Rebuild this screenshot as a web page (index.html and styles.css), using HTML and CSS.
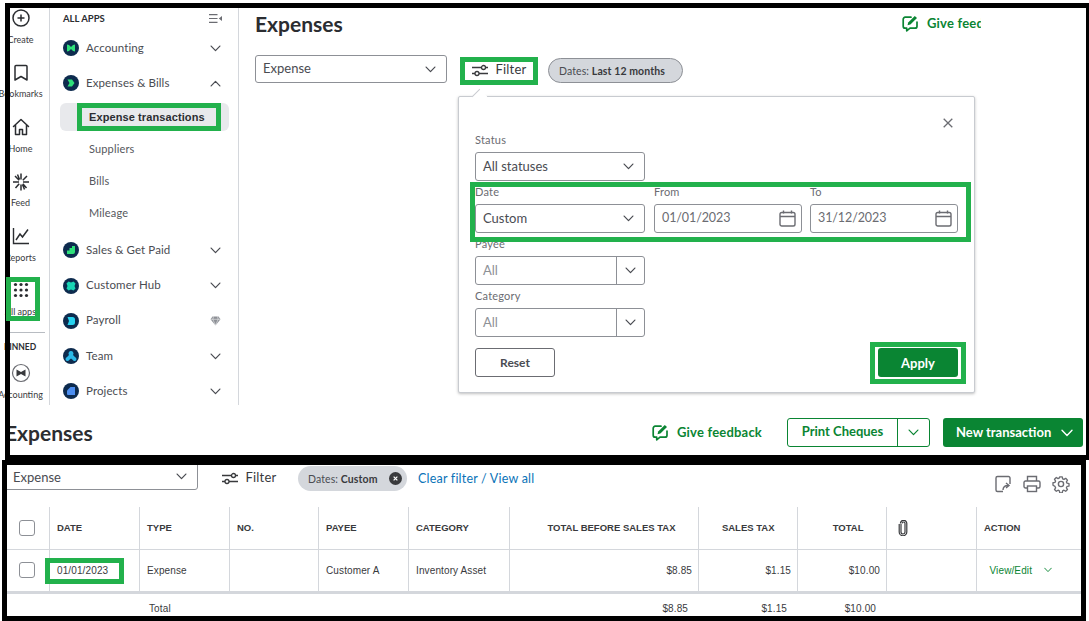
FILE: index.html
```html
<!DOCTYPE html>
<html lang="en">
<head>
<meta charset="utf-8">
<title>Expenses</title>
<link rel="stylesheet" href="styles.css">
</head>
<body>
<svg class="defs" width="0" height="0" aria-hidden="true">
  <symbol id="chev" viewBox="0 0 12 8"><path d="M1 1.200 6 6.400 11 1.200" fill="none" stroke="currentColor" stroke-width="1.400" stroke-linecap="round" stroke-linejoin="round"/></symbol>
  <symbol id="sliders" viewBox="0 0 16 13"><g fill="none" stroke="currentColor" stroke-width="1.300"><path d="M0 3.500h9.500M13.500 3.500H16M0 9.500h3M7 9.500h9"/><circle cx="11.500" cy="3.500" r="2"/><circle cx="5" cy="9.500" r="2"/></g></symbol>
  <symbol id="cal" viewBox="0 0 17 17"><g fill="none" stroke="#6b6c72" stroke-width="1.400"><rect x="1" y="2.500" width="15" height="13.500" rx="1.800"/><path d="M1 6.500h15M4.500 .5v3M12.500 .5v3"/></g></symbol>
  <symbol id="feedback" viewBox="0 0 17 17"><path d="M9 2.200H3.200A2 2 0 0 0 1.200 4.200v7a2 2 0 0 0 2 2h1.500v2.600l3.300-2.600h5a2 2 0 0 0 2-2V7" fill="none" stroke="#0a8533" stroke-width="1.700" stroke-linejoin="round" stroke-linecap="round"/><path d="M5.500 10.300l.7-2.800L12.800 1l2.200 2.100-6.600 6.500z" fill="#0a8533"/></symbol>
</svg>

<section class="shot shot-top">
  <div class="upper">
    <nav class="rail">
      <div class="rail-group">
        <a class="rail-item"><svg class="rail-icon" viewBox="0 0 20 20"><circle cx="10" cy="10" r="8" fill="none" stroke="#2b2d31" stroke-width="1.500"/><path d="M10 6.500v7M6.500 10h7" stroke="#2b2d31" stroke-width="1.500"/></svg><span>Create</span></a>
        <a class="rail-item"><svg class="rail-icon" viewBox="0 0 20 20"><path d="M5 2.500h10a1 1 0 0 1 1 1V17l-6-3.500L4 17V3.500a1 1 0 0 1 1-1z" fill="none" stroke="#2b2d31" stroke-width="1.500" stroke-linejoin="round"/></svg><span>Bookmarks</span></a>
        <a class="rail-item"><svg class="rail-icon" viewBox="0 0 20 20"><path d="M2.500 9.500 10 2.500l7.500 7M4.500 8v9.500h4v-5h3v5h4V8" fill="none" stroke="#2b2d31" stroke-width="1.500" stroke-linejoin="round" stroke-linecap="round"/></svg><span>Home</span></a>
        <a class="rail-item"><svg class="rail-icon" viewBox="0 0 20 20"><path d="M10 1.500v6M10 12.500v6M2 10h6M12 10h6M4 4l4.200 4.200M16 4l-4.200 4.200M4.500 16l3.700-4.200M15.500 16l-3.700-4.200M6.500 2.500l2 5M13.500 17.500l-2-5" fill="none" stroke="#2b2d31" stroke-width="1.500"/></svg><span>Feed</span></a>
        <a class="rail-item"><svg class="rail-icon" viewBox="0 0 20 20"><path d="M2.500 2v15.500H18" fill="none" stroke="#2b2d31" stroke-width="1.400"/><path d="M5 14l4-6 2.500 3L17 3.500" fill="none" stroke="#2b2d31" stroke-width="1.500"/></svg><span>Reports</span></a>
        <a class="rail-item"><svg class="rail-icon" viewBox="0 0 20 20"><g fill="#2b2d31"><circle cx="4.500" cy="3.500" r="1.600"/><circle cx="10" cy="3.500" r="1.600"/><circle cx="15.500" cy="3.500" r="1.600"/><circle cx="4.500" cy="9" r="1.600"/><circle cx="10" cy="9" r="1.600"/><circle cx="15.500" cy="9" r="1.600"/><circle cx="4.500" cy="14.500" r="1.600"/><circle cx="10" cy="14.500" r="1.600"/><circle cx="15.500" cy="14.500" r="1.600"/></g></svg><span>All apps</span></a>
      </div>
      <div class="rail-pinned">
        <strong>PINNED</strong>
        <a class="rail-item"><svg class="rail-icon" viewBox="0 0 20 20"><circle cx="10" cy="10" r="8.500" fill="none" stroke="#6b6c72" stroke-width="1.200"/><path d="M5.500 6.500 10 9l4.500-2.500v7L10 11l-4.500 2.500z" fill="#393a3d"/></svg><span>Accounting</span></a>
      </div>
    </nav>

    <aside class="sidebar">
      <header class="side-head">
        <strong>ALL APPS</strong>
        <svg class="collapse" viewBox="0 0 13 9"><path d="M0 .7h8.500M0 4.500h8.500M0 8.300h8.500" stroke="#6b6c72" stroke-width="1.200"/><path d="M13 2v5L9.800 4.500z" fill="#6b6c72"/></svg>
      </header>
      <ul class="side-nav">
        <li class="side-row"><svg class="app" viewBox="0 0 16 16"><circle cx="8" cy="8" r="8" fill="#0d2b4e"/><path d="M4 4.500l2 .5 2 2 2-2 2-.5v7l-2-.5-2-2-2 2-2 .5z" fill="#2ee07a"/></svg><span>Accounting</span><svg class="chev"><use href="#chev"/></svg></li>
        <li class="side-row"><svg class="app" viewBox="0 0 16 16"><circle cx="8" cy="8" r="8" fill="#0d2b4e"/><path d="M4.500 4.500h4.500l2.500 3.500-2.500 3.500H4.500L6.500 8z" fill="#2ee07a"/></svg><span>Expenses &amp; Bills</span><svg class="chev flip"><use href="#chev"/></svg></li>
        <li class="sub-group">
          <a class="sub-row active">Expense transactions</a>
          <a class="sub-row">Suppliers</a>
          <a class="sub-row">Bills</a>
          <a class="sub-row">Mileage</a>
        </li>
        <li class="side-row"><svg class="app" viewBox="0 0 16 16"><circle cx="8" cy="8" r="8" fill="#0d2b4e"/><path d="M4 12V8.500h2.500V6h2.500V4h3v6a2 2 0 0 1-2 2z" fill="#2ee07a"/></svg><span>Sales &amp; Get Paid</span><svg class="chev"><use href="#chev"/></svg></li>
        <li class="side-row"><svg class="app" viewBox="0 0 16 16"><circle cx="8" cy="8" r="8" fill="#0d2b4e"/><path d="M5.500 3.500 8 4.500l2.500-1 2 2-1 2.500 1 2.500-2 2-2.500-1-2.500 1-2-2 1-2.500-1-2.500z" fill="#1ad5b5"/></svg><span>Customer Hub</span><svg class="chev"><use href="#chev"/></svg></li>
        <li class="side-row"><svg class="app" viewBox="0 0 16 16"><circle cx="8" cy="8" r="8" fill="#0d2b4e"/><path d="M4.500 4h5a2.500 2.500 0 0 1 2.500 2.500v3A2.500 2.500 0 0 1 9.500 12h-5L6 8z" fill="#27d3f0"/></svg><span>Payroll</span><svg class="gem" viewBox="0 0 11 10"><path d="M2.500.5h6l2 2.800L5.500 9.500.5 3.300z" fill="#8d9096"/><path d="M.5 3.300h10M3.500.5l-.7 2.800 2.700 6 2.700-6L7.500.5" fill="none" stroke="#fff" stroke-width=".5"/></svg></li>
        <li class="side-row"><svg class="app" viewBox="0 0 16 16"><circle cx="8" cy="8" r="8" fill="#0d2b4e"/><path d="M8 3a2.500 2.500 0 0 1 2 4l2.200 2.200a2 2 0 1 1-2.600 2.600L8 10.500l-1.600 1.300a2 2 0 1 1-2.600-2.600L6 7a2.500 2.500 0 0 1 2-4z" fill="#2bb8e8"/></svg><span>Team</span><svg class="chev"><use href="#chev"/></svg></li>
        <li class="side-row"><svg class="app" viewBox="0 0 16 16"><circle cx="8" cy="8" r="8" fill="#0d2b4e"/><path d="M4 7.500 7.500 4H12v8H5a1 1 0 0 1-1-1z" fill="#4c8ef0"/></svg><span>Projects</span><svg class="chev"><use href="#chev"/></svg></li>
      </ul>
    </aside>

    <main class="main">
      <div class="title-row">
        <h1 class="title">Expenses</h1>
        <a class="feedback feedback-cut"><svg class="fb-icon"><use href="#feedback"/></svg><span>Give feedback</span></a>
      </div>
      <div class="filter-row">
        <div class="select select-type"><span>Expense</span><svg class="chev"><use href="#chev"/></svg></div>
        <button class="filter-btn"><svg class="sliders"><use href="#sliders"/></svg><span>Filter</span></button>
        <div class="pill pill-last"><span>Dates: <b>Last 12 months</b></span></div>
      </div>

      <div class="popover">
        <i class="pop-arrow"></i>
        <svg class="pop-close" viewBox="0 0 10 10"><path d="M.7.7l8.600 8.600M9.300.7.700 9.300" stroke="#6b6c72" stroke-width="1.300"/></svg>
        <div class="field">
          <label>Status</label>
          <div class="select w170"><span>All statuses</span><svg class="chev"><use href="#chev"/></svg></div>
        </div>
        <div class="field-row">
          <div class="field">
            <label>Date</label>
            <div class="select w170"><span>Custom</span><svg class="chev"><use href="#chev"/></svg></div>
          </div>
          <div class="field">
            <label>From</label>
            <div class="select w148"><span>01/01/2023</span><svg class="cal"><use href="#cal"/></svg></div>
          </div>
          <div class="field">
            <label>To</label>
            <div class="select w148"><span>31/12/2023</span><svg class="cal"><use href="#cal"/></svg></div>
          </div>
        </div>
        <div class="field">
          <label>Payee</label>
          <div class="combo"><span>All</span><i><svg class="chev"><use href="#chev"/></svg></i></div>
        </div>
        <div class="field">
          <label>Category</label>
          <div class="combo"><span>All</span><i><svg class="chev"><use href="#chev"/></svg></i></div>
        </div>
        <div class="pop-foot">
          <button class="btn-reset">Reset</button>
          <button class="btn-apply">Apply</button>
        </div>
      </div>
    </main>
  </div>

  <div class="page-head">
    <h1 class="title title-cut">Expenses</h1>
    <a class="feedback"><svg class="fb-icon"><use href="#feedback"/></svg><span>Give feedback</span></a>
    <div class="split">
      <button class="split-main">Print Cheques</button>
      <button class="split-arrow"><svg class="chev"><use href="#chev"/></svg></button>
    </div>
    <button class="new-btn"><span>New transaction</span><svg class="chev"><use href="#chev"/></svg></button>
  </div>

  <i class="mark mark-apps"></i>
  <i class="mark mark-side"></i>
  <i class="mark mark-filter"></i>
  <i class="mark mark-date"></i>
  <i class="mark mark-apply"></i>
</section>

<section class="shot shot-bottom">
  <div class="toolbar">
    <div class="select select-cut"><span>Expense</span><svg class="chev"><use href="#chev"/></svg></div>
    <button class="filter-btn filter-plain"><svg class="sliders"><use href="#sliders"/></svg><span>Filter</span></button>
    <div class="pill pill-custom"><span>Dates: <b>Custom</b></span><svg class="pill-x" viewBox="0 0 14 14"><circle cx="7" cy="7" r="7" fill="#393a3d"/><path d="M5 5l4 4M9 5l-4 4" stroke="#fff" stroke-width="1.300"/></svg></div>
    <a class="clear-link">Clear filter / View all</a>
    <div class="tools">
      <svg viewBox="0 0 18 18"><path d="M16 9V3a1.500 1.500 0 0 0-1.500-1.500h-11A1.500 1.500 0 0 0 2 3v12a1.500 1.500 0 0 0 1.500 1.500H9" fill="none" stroke="#6b6c72" stroke-width="1.400"/><path d="M9 15c0-3 2-4.500 5-4.500M12 8l3 2.500L12 13" fill="none" stroke="#6b6c72" stroke-width="1.400"/></svg>
      <svg viewBox="0 0 18 18"><path d="M4.500 6V1.500h9V6M4.500 13H2.500a1.500 1.500 0 0 1-1.500-1.500v-4A1.500 1.500 0 0 1 2.500 6h13A1.500 1.500 0 0 1 17 7.500v4a1.500 1.500 0 0 1-1.500 1.500h-2" fill="none" stroke="#6b6c72" stroke-width="1.400"/><rect x="4.500" y="11" width="9" height="5.500" fill="none" stroke="#6b6c72" stroke-width="1.400"/></svg>
      <svg viewBox="0 0 18 18"><circle cx="9" cy="9" r="2.600" fill="none" stroke="#6b6c72" stroke-width="1.400"/><path d="M7.600 1h2.800l.4 2.200 1.500.7 1.900-1.200 2 2-1.200 1.900.7 1.500 2.200.4v2.800l-2.200.4-.7 1.500 1.200 1.900-2 2-1.900-1.200-1.500.7-.4 2.200H7.600l-.4-2.200-1.500-.7-1.900 1.200-2-2 1.200-1.900-.7-1.500L.1 10.400V7.600l2.200-.4.700-1.500-1.200-1.900 2-2 1.900 1.200 1.500-.7z" transform="translate(.9 .9) scale(.9)" fill="none" stroke="#6b6c72" stroke-width="1.500" stroke-linejoin="round"/></svg>
    </div>
  </div>

  <table class="grid">
    <colgroup>
      <col class="c-check"><col class="c-90"><col class="c-90"><col class="c-89"><col class="c-90"><col class="c-101"><col class="c-189"><col class="c-99"><col class="c-89"><col class="c-90"><col class="c-action">
    </colgroup>
    <thead>
      <tr>
        <th><i class="check"></i></th>
        <th>DATE</th><th>TYPE</th><th>NO.</th><th>PAYEE</th><th>CATEGORY</th>
        <th class="num">TOTAL BEFORE SALES TAX</th><th class="num">SALES TAX</th><th class="num">TOTAL</th>
        <th><svg class="clip" viewBox="0 0 10 16"><path d="M3 4v8a2 2 0 0 0 4 0V3.500a1.500 1.500 0 0 0-3 0M1.200 4v8a3.800 3.800 0 0 0 7.600 0V3.500a3.200 3.200 0 0 0-6.400 0" fill="none" stroke="#393a3d" stroke-width="1.200"/></svg></th>
        <th>ACTION</th>
      </tr>
    </thead>
    <tbody>
      <tr>
        <td><i class="check"></i></td>
        <td class="text">01/01/2023</td><td class="text">Expense</td><td></td><td class="text">Customer A</td><td class="text">Inventory Asset</td>
        <td class="val">$8.85</td><td class="val">$1.15</td><td class="val">$10.00</td><td></td>
        <td class="act"><a>View/Edit</a><svg class="chev"><use href="#chev"/></svg></td>
      </tr>
    </tbody>
    <tfoot>
      <tr>
        <td></td><td></td><td class="foot-label">Total</td><td></td><td></td><td></td>
        <td class="foot-val">$8.85</td><td class="foot-val">$1.15</td><td class="foot-val">$10.00</td><td></td><td></td>
      </tr>
    </tfoot>
  </table>

  <i class="mark mark-row"></i>
</section>
</body>
</html>
```

FILE: styles.css
```css
* { box-sizing: border-box; }
html, body { margin: 0; padding: 0; width: 1089px; height: 621px; overflow: hidden; background: #fff; }
body { padding-top: 3px; font-family: Lato, "Noto Sans", sans-serif; color: #393a3d; font-size: 12px; }
.defs { position: absolute; }
a { color: inherit; text-decoration: none; }
h1, ul { margin: 0; padding: 0; list-style: none; }
button { font: inherit; padding: 0; background: none; border: 0; color: inherit; }
i { font-style: normal; display: block; }

.shot { position: relative; border: 5px solid #000; background: #fff; }
.shot-top { margin-left: 5px; width: 1086px; height: 457px; }
.shot-top::before { content: ""; position: absolute; left: -5px; top: -5px; bottom: -5px; width: 5px; background: #000; }
.shot-bottom { margin-left: 2px; width: 1084px; height: 161px; overflow: hidden; }

.mark { position: absolute; border: 5px solid #22b14c; }
.mark-apps { left: -4px; top: 269px; width: 34px; height: 44px; }
.mark-side { left: 67px; top: 95px; width: 144px; height: 28px; }
.mark-filter { left: 450px; top: 49px; width: 78px; height: 28px; }
.mark-date { left: 460px; top: 174px; width: 501px; height: 60px; }
.mark-apply { left: 860px; top: 334px; width: 96px; height: 42px; }
.mark-row { left: 38px; top: 93px; width: 79px; height: 26px; }

.upper { display: flex; height: 397px; }

/* icon rail */
.rail { width: 40px; flex: none; border-right: 1px solid #d4d7dc; }
.rail-group { display: flex; flex-direction: column; gap: 18px; margin-left: -10px; width: 41px; }
.rail-item { display: flex; flex-direction: column; align-items: center; gap: 6.500px; width: 41px; font-size: 9px; line-height: 10px; white-space: nowrap; color: #393a3d; }
.rail-icon { width: 20px; height: 20px; flex: none; }
.rail-pinned { margin-top: 15px; border-top: 1px solid #b8bcc2; margin-right: 4px; padding-top: 8px; display: flex; flex-direction: column; }
.rail-pinned strong { font-size: 8.500px; line-height: 12px; font-weight: 700; margin-left: -10px; width: 40px; text-align: center; display: block; color: #2b2d31; }
.rail-pinned .rail-item { margin-left: -10px; margin-top: 10px; }

/* sidebar */
.sidebar { width: 189px; flex: none; border-right: 1px solid #d4d7dc; padding: 0 17px 0 13px; }
.side-head { height: 20px; margin-bottom: 6px; display: flex; align-items: center; justify-content: space-between; margin-right: -1px; }
.side-head strong { font-size: 9.500px; font-weight: 700; color: #2b2d31; }
.collapse { width: 13px; height: 9px; }
.side-nav { display: flex; flex-direction: column; gap: 7.250px; }
.side-row { height: 28px; display: flex; align-items: center; font-size: 11.500px; color: #4a4c52; letter-spacing: .1px; }
.side-row span { flex: 1; margin-left: 7px; white-space: nowrap; padding-bottom: 2px; }
.app { width: 16px; height: 16px; flex: none; }
.chev { width: 11px; height: 7px; flex: none; color: #4a4c52; display: block; }
.flip { transform: scaleY(-1); }
.gem { width: 11px; height: 10px; flex: none; }
.sub-group { margin: -1.500px 0 2px -3px; width: 169px; display: flex; flex-direction: column; gap: 4px; }
.sub-row { height: 28px; padding: 0 0 2px 29px; display: flex; align-items: center; font-size: 11px; color: #55575d; letter-spacing: .15px; }
.sub-row.active { padding-bottom: 0; background: #e8e9ec; border-radius: 6px; font-family: "Liberation Sans", sans-serif; font-weight: 700; font-size: 11px; color: #2b2d31; letter-spacing: .1px; }

/* main */
.main { position: relative; flex: 1; padding-left: 16px; padding-right: 104px; }
.title-row { height: 32px; display: flex; align-items: center; justify-content: space-between; }
.title { font-size: 21px; font-weight: 700; color: #2b2d31; line-height: 32px; }
.feedback { display: flex; align-items: center; gap: 8px; font-size: 13px; font-weight: 700; color: #0a8533; white-space: nowrap; letter-spacing: .2px; }
.feedback span { padding-bottom: 2px; }
.feedback-cut { width: 79px; margin-right: 1px; overflow: hidden; margin-bottom: 1px; }
.fb-icon { width: 17px; height: 17px; flex: none; }
.filter-row { display: flex; align-items: flex-start; margin-top: 15px; }
.select { display: flex; align-items: center; justify-content: space-between; height: 29px; border: 1px solid #8d9096; border-radius: 3px; background: #fff; font-size: 13px; padding: 0 10px 0 7px; color: #4a4c52; white-space: nowrap; }
.select span { padding-bottom: 2px; }
.select-type { width: 192px; height: 28px; }
.filter-btn { display: flex; align-items: center; width: 54px; height: 28px; margin: 1px 22px 0 25px; gap: 7.500px; font-size: 13px; letter-spacing: .2px; color: #393a3d; flex: none; }
.filter-btn span { padding-bottom: 2px; }
.sliders { width: 16px; height: 13px; flex: none; color: #393a3d; }
.pill { height: 25px; border-radius: 13px; background: #d4d7dc; font-size: 10.500px; display: flex; align-items: center; color: #4a4c52; letter-spacing: .1px; white-space: nowrap; }
.pill b { font-weight: 700; color: #393a3d; }
.pill-last { width: 135px; margin-top: 3px; padding-left: 10px; border: 1px solid #8d9096; }

/* popover */
.popover { position: absolute; left: 219px; top: 88px; width: 517px; padding: 36px 16px 15px; border: 1px solid #c8cbd0; border-radius: 2px; background: #fff; box-shadow: 0 1px 3px rgba(0,0,0,.25); display: flex; flex-direction: column; gap: 4px; }
.pop-arrow { position: absolute; left: 15px; top: -6px; width: 11px; height: 11px; background: #fff; border-left: 1px solid #c8cbd0; transform: rotate(45deg); }
.pop-close { position: absolute; right: 21px; top: 21px; width: 10px; height: 10px; }
.field { display: flex; flex-direction: column; gap: 5px; }
.field label { height: 14px; line-height: 14px; font-size: 11px; color: #6b6c72; letter-spacing: .2px; }
.field-row { display: flex; gap: 9px; }
.field-row .field:last-child { margin-left: -1px; }
.w170 { width: 170px; }
.w148 { width: 148px; padding-right: 5px; color: #6b6c72; font-size: 12.500px; letter-spacing: -.1px; }
.cal { width: 17px; height: 17px; flex: none; }
.combo { width: 170px; height: 29px; border: 1px solid #8d9096; border-radius: 3px; display: flex; align-items: center; font-size: 13px; color: #8d9096; }
.combo span { flex: 1; padding: 0 0 2px 7px; }
.combo i { width: 28px; height: 100%; border-left: 1px solid #8d9096; display: flex; align-items: center; justify-content: center; }
.pop-foot { margin-top: 7px; display: flex; justify-content: space-between; }
.btn-reset { width: 80px; height: 29px; border: 1px solid #6b6c72; border-radius: 3px; font-size: 12px; font-weight: 700; color: #4a4c52; }
.btn-apply { width: 80px; height: 29px; border-radius: 3px; background: #0a8533; color: #fff; font-size: 13px; font-weight: 700; }

/* page head */
.page-head { height: 50px; padding: 13px 3px 0 0; display: flex; align-items: flex-start; }
.title-cut { margin-left: -5px; flex: 1; line-height: 29px; }
.split { display: flex; width: 143px; height: 29px; margin: 0 13px 0 25px; border: 1px solid #0a8533; border-radius: 3px; color: #0a8533; font-size: 13px; font-weight: 700; }
.split-main { width: 110px; padding-bottom: 3px; border-right: 1px solid #0a8533; }
.split-arrow { flex: 1; display: flex; align-items: center; justify-content: center; }
.split-arrow .chev { color: #0a8533; }
.page-head .feedback { height: 29px; }
.new-btn { width: 140px; height: 29px; border-radius: 3px; background: #0a8533; color: #fff; font-size: 13px; font-weight: 700; display: flex; align-items: center; justify-content: space-between; padding: 0 10px 0 13px; }
.new-btn span { padding-bottom: 2px; }
.new-btn .chev { color: #fff; width: 12px; height: 8px; }

/* bottom toolbar */
.toolbar { height: 42px; display: flex; align-items: flex-start; }
.select-cut { width: 199px; height: 28px; margin: -3px 0 0 -8px; padding: 1px 10px 0 13px; flex: none; }
.select-cut span { padding-bottom: 0; }
.filter-plain { margin: -1px 0 0 24px; width: 54px; }
.pill-custom { width: 109px; margin: 1px 0 0 22px; padding: 0 5px 0 10px; justify-content: space-between; }
.pill-x { width: 13px; height: 13px; flex: none; }
.clear-link { margin: 6px 0 0 11px; font-size: 12.500px; color: #0b73b8; letter-spacing: .2px; white-space: nowrap; line-height: 16px; }
.tools { margin: 10px 11px 0 auto; display: flex; gap: 11px; }
.tools svg { width: 18px; height: 18px; }

/* table */
.grid { table-layout: fixed; width: 1074px; border-collapse: collapse; font-family: "Liberation Sans", Arial, sans-serif; font-size: 10px; color: #393a3d; }
.c-check { width: 42px; } .c-90 { width: 90px; } .c-89 { width: 89px; } .c-101 { width: 101px; } .c-189 { width: 189px; } .c-99 { width: 99px; } .c-action { width: 105px; }
.grid th { height: 42px; padding: 0 7.500px; text-align: left; font-size: 9.500px; font-weight: 700; border-left: 1px solid #d4d7dc; border-bottom: 1px solid #d4d7dc; white-space: nowrap; }
.grid tbody td { height: 43px; padding: 0 7.500px; border-left: 1px solid #d4d7dc; border-bottom: 3px solid #d4d7dc; letter-spacing: .12px; }
.grid tbody td.text, .grid tbody td.val { padding-top: 1px; }
.grid th:first-child, .grid tbody td:first-child { border-left: 0; padding-left: 12px; }
.grid th.num { text-align: right; padding-right: 22px; }
.grid td.val { text-align: right; padding-right: 5.500px; }
.grid tfoot td { padding: 9px 0 0; height: 22px; vertical-align: top; line-height: 12px; font-size: 10px; letter-spacing: .12px; }
.grid td.foot-label { padding-left: 10px; }
.grid td.foot-val { text-align: right; padding-right: 10px; }
.check { width: 16px; height: 16px; border: 1px solid #8d9096; border-radius: 3px; }
.clip { width: 10px; height: 16px; display: block; margin-left: 4px; }
.act a { color: #0a8533; font-family: "Liberation Sans", sans-serif; }
.grid td.act { white-space: nowrap; padding-left: 13px; }
.act a, .act .chev { display: inline-block; vertical-align: middle; }
.act .chev { width: 8px; height: 6px; margin-left: 12px; color: #0a8533; }
```
